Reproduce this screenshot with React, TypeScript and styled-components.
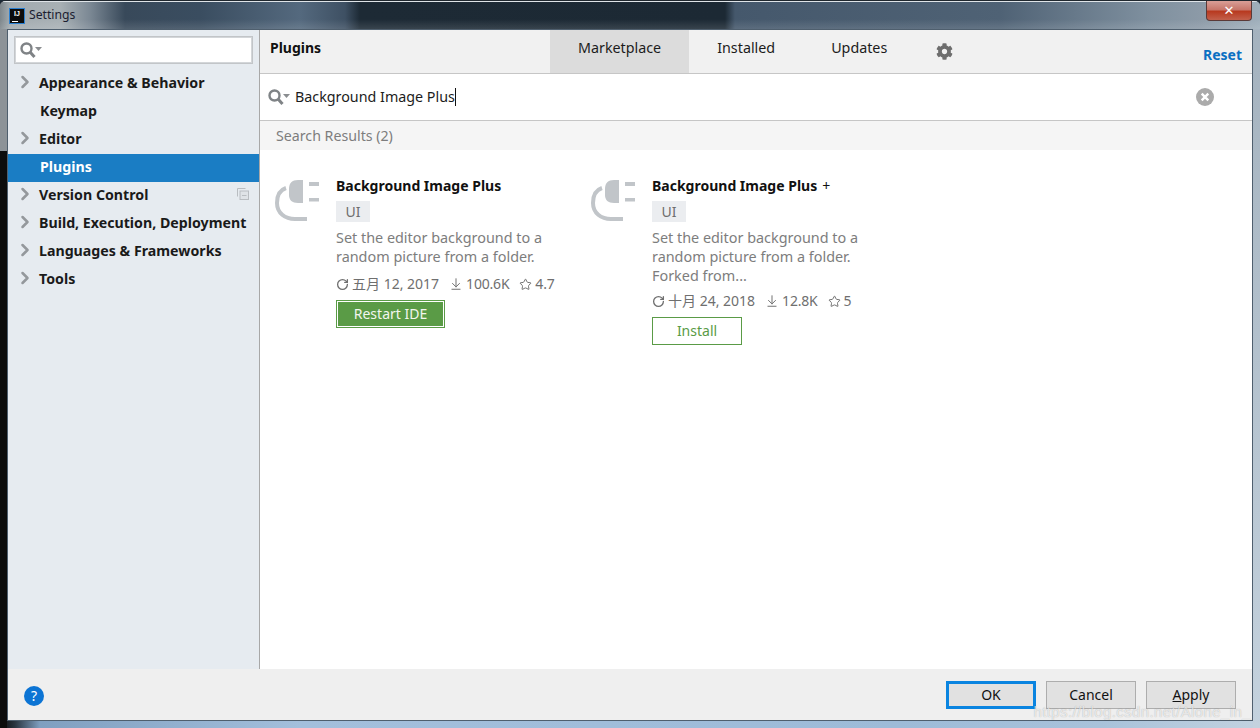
import React from "react";
import styled, { createGlobalStyle } from "styled-components";
import { ArrowDownToLine, ChevronRight, RotateCw, Star } from "lucide-react";
import { FaCog } from "react-icons/fa";

const fontStack = `"Noto Sans", "Noto Sans CJK SC", sans-serif`;

const GlobalStyle = createGlobalStyle`
  html, body {
    margin: 0;
    padding: 0;
    background: #1c2935;
  }
  * {
    box-sizing: border-box;
  }
`;

const treeItems = [
  { label: "Appearance & Behavior", arrow: true },
  { label: "Keymap" },
  { label: "Editor", arrow: true },
  { label: "Plugins", selected: true },
  { label: "Version Control", arrow: true, copy: true },
  { label: "Build, Execution, Deployment", arrow: true },
  { label: "Languages & Frameworks", arrow: true },
  { label: "Tools", arrow: true },
];

const tabs = ["Marketplace", "Installed", "Updates"];

const plugins = [
  {
    name: "Background Image Plus",
    description: ["Set the editor background to a", "random picture from a folder."],
    date: "五月 12, 2017",
    downloads: "100.6K",
    rating: "4.7",
    restart: true,
  },
  {
    name: "Background Image Plus",
    suffix: "+",
    description: [
      "Set the editor background to a",
      "random picture from a folder.",
      "Forked from...",
    ],
    date: "十月 24, 2018",
    downloads: "12.8K",
    rating: "5",
  },
];

const SearchIcon = () => (
  <svg width="23" height="16" viewBox="0 0 23 16">
    <circle cx="6.5" cy="6.5" r="5" fill="none" stroke="#7f8386" strokeWidth="2.4" />
    <path d="M10 10 L14.5 15" stroke="#7f8386" strokeWidth="3" />
    <path d="M15 5 H22 L18.5 9 Z" fill="#8a8d90" />
  </svg>
);

const PlugIcon = () => (
  <svg width="46" height="44" viewBox="0 0 46 44">
    <path d="M28 0 H23 C17 0 14 3 14 9 V15 C14 20 17 23 23 23 H28 Z" fill="#c1c5c9" />
    <rect x="34" y="2" width="10" height="4" fill="#c1c5c9" />
    <rect x="34" y="18" width="10" height="3.5" fill="#c1c5c9" />
    <path d="M11 8 C5 10 2 15 2 23 C2 33 10 39 20 39 H32" fill="none" stroke="#c1c5c9" strokeWidth="4" />
  </svg>
);

const CopyIcon = () => (
  <svg width="12" height="12" viewBox="0 0 12 12">
    <path d="M0.5 8.5 V0.5 H8.5" fill="none" stroke="#b9bdc1" />
    <rect x="3" y="3" width="8.5" height="8.5" fill="#dfe3e7" stroke="#b9bdc1" />
    <path d="M5 7.5 H9.5" stroke="#b9bdc1" />
  </svg>
);

const ClearIcon = () => (
  <svg width="18" height="18" viewBox="0 0 18 18">
    <circle cx="9" cy="9" r="9" fill="#ababab" />
    <path d="M5.7 5.7 L12.3 12.3 M12.3 5.7 L5.7 12.3" stroke="#fff" strokeWidth="2.4" />
  </svg>
);

const App = () => (
  <>
    <GlobalStyle />
    <Frame>
      <TitleBar>
        <AppLogo>
          <span>IJ</span>
          <i />
        </AppLogo>
        <TitleText>Settings</TitleText>
        <CloseButton>✕</CloseButton>
      </TitleBar>
      <Dialog>
        <Main>
          <Sidebar>
            <SidebarSearch>
              <SearchIcon />
            </SidebarSearch>
            <Tree>
              {treeItems.map((item) => (
                <TreeRow key={item.label} $selected={item.selected}>
                  <ArrowSlot>
                    {item.arrow && <ChevronRight size={20} strokeWidth={3} color="#94989c" />}
                  </ArrowSlot>
                  <TreeLabel $nudge={!item.arrow}>{item.label}</TreeLabel>
                  {item.copy && (
                    <CopySlot>
                      <CopyIcon />
                    </CopySlot>
                  )}
                </TreeRow>
              ))}
            </Tree>
          </Sidebar>
          <Content>
            <Header>
              <HeaderTitle>Plugins</HeaderTitle>
              <Tabs>
                {tabs.map((tab, i) => (
                  <Tab key={tab} $active={i === 0}>
                    {tab}
                  </Tab>
                ))}
              </Tabs>
              <GearSlot>
                <FaCog size={17} color="#6e6e6e" />
              </GearSlot>
              <ResetLink>Reset</ResetLink>
            </Header>
            <SearchBar>
              <SearchIcon />
              <SearchText>
                Background Image Plus
                <Caret />
              </SearchText>
              <ClearSlot>
                <ClearIcon />
              </ClearSlot>
            </SearchBar>
            <ResultsHeader>Search Results (2)</ResultsHeader>
            <Results>
              {plugins.map((plugin, i) => (
                <Card key={i}>
                  <PlugSlot>
                    <PlugIcon />
                  </PlugSlot>
                  <CardBody>
                    <CardName>
                      {plugin.name}
                      {plugin.suffix && <NameSuffix>{plugin.suffix}</NameSuffix>}
                    </CardName>
                    <Tag>UI</Tag>
                    <Description>
                      {plugin.description.map((line) => (
                        <div key={line}>{line}</div>
                      ))}
                    </Description>
                    <Meta>
                      <MetaItem>
                        <RotateCw size={13} strokeWidth={2.4} color="#6f6f6f" />
                        {plugin.date}
                      </MetaItem>
                      <MetaItem>
                        <ArrowDownToLine size={14} strokeWidth={1.7} color="#6f6f6f" />
                        <MetaNumber>{plugin.downloads}</MetaNumber>
                      </MetaItem>
                      <MetaItem>
                        <Star size={13} strokeWidth={1.8} color="#6f6f6f" />
                        <MetaNumber>{plugin.rating}</MetaNumber>
                      </MetaItem>
                    </Meta>
                    {plugin.restart ? (
                      <RestartButton>Restart IDE</RestartButton>
                    ) : (
                      <InstallButton>Install</InstallButton>
                    )}
                  </CardBody>
                </Card>
              ))}
            </Results>
          </Content>
        </Main>
        <Footer>
          <HelpButton>?</HelpButton>
          <FooterActions>
            <DialogButton $primary>OK</DialogButton>
            <DialogButton>Cancel</DialogButton>
            <DialogButton>
              <u>A</u>pply
            </DialogButton>
          </FooterActions>
        </Footer>
      </Dialog>
      <Watermark>https://blog.csdn.net/Alone_in_</Watermark>
    </Frame>
  </>
);

export default App;

const Frame = styled.div`
  position: relative;
  width: 1260px;
  height: 728px;
  overflow: hidden;
  display: flex;
  flex-direction: column;
  padding: 0 7px 7px 7px;
  font-family: ${fontStack};
  border-top: 1px solid #20282f;
  border-radius: 6px 6px 0 0;
  background:
    linear-gradient(180deg, #8d9398 0, #8d9398 150px, #0c0c0c 150px) left top / 7px 100% no-repeat,
    linear-gradient(180deg, #a3b1bd 0, #c4d2de 100%) right top / 7px 100% no-repeat,
    linear-gradient(90deg, #0a0a0a 0, #2a3540 15px, #7f9fc0 40px, #a3bfdc 300px, #9dbbd8 900px, #a8c2da 1100px, #c2d2e0 100%);
`;

const TitleBar = styled.div`
  height: 28px;
  margin: 0 -7px;
  padding: 0 8px 0 9px;
  display: flex;
  align-items: flex-start;
  box-shadow: inset 0 1px 0 #dfe4e8;
  background:
    linear-gradient(180deg, rgba(0, 0, 0, 0) 65%, rgba(255, 255, 255, 0.12) 100%),
    linear-gradient(
      90deg,
      #7d868b 0,
      #a2abb0 10px,
      #a8b0b4 60px,
      #7b8894 90px,
      #38495a 125px,
      #3a4d60 200px,
      #54697e 300px,
      #3e5063 345px,
      #1d2a35 360px,
      #1c2934 725px,
      #45586c 735px,
      #4f6275 1000px,
      #7f909f 1150px,
      #8c9aa7 1200px,
      #9fafbb 100%
    );
`;

const AppLogo = styled.div`
  width: 16px;
  height: 16px;
  margin-top: 7px;
  position: relative;
  background: #0c0c0c;
  border: 1px solid #2a7fd0;
  color: #fff;
  font: bold 7px "Liberation Sans", sans-serif;
  text-align: center;
  line-height: 9px;

  & > i {
    position: absolute;
    left: 2px;
    bottom: 1px;
    width: 6px;
    height: 1px;
    background: #fff;
  }
`;

const TitleText = styled.div`
  margin: 5px 0 0 4px;
  font-size: 12.2px;
  line-height: 18px;
  color: #1b2030;
`;

const CloseButton = styled.div`
  margin-left: auto;
  margin-top: 0;
  width: 46px;
  height: 20px;
  display: flex;
  align-items: center;
  justify-content: center;
  color: #fff;
  font: bold 13px "DejaVu Sans", sans-serif;
  border: 1px solid #5a3a38;
  border-top: 0;
  border-radius: 0 0 4px 4px;
  background: linear-gradient(180deg, #d99f97 0, #c7776b 45%, #b83a20 55%, #c2604c 100%);
`;

const Dialog = styled.div`
  flex: 1;
  display: flex;
  flex-direction: column;
  min-height: 0;
  border: 1px solid #4f5f6e;
  background: #f0f0f0;
`;

const Main = styled.div`
  flex: 1;
  display: flex;
  min-height: 0;
`;

const Sidebar = styled.div`
  width: 252px;
  background: #e6ebf0;
  border-right: 1px solid #a8a8a8;
  padding-top: 6px;
`;

const SidebarSearch = styled.div`
  width: 239px;
  height: 28px;
  margin-left: 6px;
  padding-left: 5px;
  display: flex;
  align-items: center;
  background: #fff;
  border: 1px solid #c2c5c8;
  outline: 1px solid #d3d6d9;
  outline-offset: -2px;
`;

const Tree = styled.div`
  margin-top: 6px;
`;

const TreeRow = styled.div<{ $selected?: boolean }>`
  height: 28px;
  padding: 0 0 4px 7px;
  display: flex;
  align-items: center;
  font-size: 14.2px;
  font-weight: 700;
  color: ${(props) => (props.$selected ? "#fff" : "#1a1a1a")};
  background: ${(props) => (props.$selected ? "#1a7dc4" : "transparent")};
`;

const ArrowSlot = styled.div`
  width: 24px;
  display: flex;
  align-items: center;
`;

const TreeLabel = styled.span<{ $nudge?: boolean }>`
  margin-left: ${(props) => (props.$nudge ? "1px" : "0")};
  white-space: nowrap;
`;

const CopySlot = styled.div`
  margin-left: auto;
  margin-right: 10px;
  display: flex;
`;

const Content = styled.div`
  flex: 1;
  display: flex;
  flex-direction: column;
  background: #fff;
`;

const Header = styled.div`
  height: 44px;
  display: flex;
  background: #f1f1f1;
  border-bottom: 1px solid #c6c6c6;
`;

const HeaderTitle = styled.div`
  width: 290px;
  padding: 7px 0 0 10px;
  font-size: 14px;
  line-height: 22px;
  font-weight: 700;
  color: #111;
`;

const Tabs = styled.div`
  display: flex;
`;

const Tab = styled.div<{ $active?: boolean }>`
  padding: 7px 28px 0;
  font-size: 14.3px;
  line-height: 22px;
  color: #1c1c1c;
  background: ${(props) => (props.$active ? "#dcdcdc" : "transparent")};
`;

const GearSlot = styled.div`
  margin: 13px 0 0 21px;
`;

const ResetLink = styled.div`
  margin-left: auto;
  padding: 15px 10px 0 0;
  font-size: 14px;
  line-height: 20px;
  font-weight: 700;
  color: #0a6fc2;
`;

const SearchBar = styled.div`
  height: 47px;
  padding: 0 38px 0 8px;
  display: flex;
  align-items: center;
  border-bottom: 1px solid #c6c6c6;
  background: #fff;
`;

const SearchText = styled.div`
  margin-left: 4px;
  font-size: 14.3px;
  line-height: 20px;
  color: #1c1c1c;
  display: flex;
  align-items: center;
`;

const Caret = styled.span`
  display: inline-block;
  width: 1px;
  height: 18px;
  background: #111;
`;

const ClearSlot = styled.div`
  margin-left: auto;
  display: flex;
`;

const ResultsHeader = styled.div`
  height: 29px;
  padding-left: 16px;
  font-size: 14.2px;
  line-height: 29px;
  color: #7d7d7d;
  background: #f5f5f5;
`;

const Results = styled.div`
  flex: 1;
  display: flex;
  padding: 26px 0 0 15px;
  background: #fff;
`;

const Card = styled.div`
  width: 316px;
  display: flex;
`;

const PlugSlot = styled.div`
  width: 61px;
  padding-top: 4px;
`;

const CardBody = styled.div`
  display: flex;
  flex-direction: column;
  align-items: flex-start;
`;

const CardName = styled.div`
  font-size: 14px;
  line-height: 20px;
  font-weight: 700;
  color: #111;
`;

const NameSuffix = styled.span`
  margin-left: 5px;
  font-weight: 400;
`;

const Tag = styled.div`
  width: 34px;
  height: 21px;
  margin-top: 5px;
  font-size: 14px;
  line-height: 21px;
  text-align: center;
  color: #6e6e6e;
  background: #ebedf0;
`;

const Description = styled.div`
  min-height: 40px;
  margin-top: 6px;
  font-size: 14.4px;
  line-height: 19px;
  color: #7d7d7d;
`;

const Meta = styled.div`
  display: flex;
  gap: 10px;
  margin-top: 6px;
  font-size: 14px;
  line-height: 20px;
  color: #6f6f6f;
`;

const MetaItem = styled.div`
  display: flex;
  align-items: center;
  gap: 3px;
`;

const MetaNumber = styled.span`
  letter-spacing: -0.2px;
`;

const RestartButton = styled.div`
  width: 109px;
  height: 28px;
  margin-top: 6px;
  font-size: 14px;
  line-height: 25px;
  text-align: center;
  color: #f2f6ee;
  background: #5a9b46;
  border: 1px solid #5a9b46;
  box-shadow: inset 0 0 0 1px #fff;
`;

const InstallButton = styled.div`
  width: 90px;
  height: 28px;
  margin-top: 6px;
  font-size: 14px;
  line-height: 26px;
  text-align: center;
  color: #5a9b46;
  background: #fff;
  border: 1px solid #5a9b46;
`;

const Footer = styled.div`
  height: 51px;
  display: flex;
  align-items: center;
  justify-content: space-between;
  padding: 0 16px 0 16px;
  background: #efefef;
`;

const HelpButton = styled.div`
  width: 20px;
  height: 20px;
  margin-top: 2px;
  border-radius: 50%;
  background: #0c74d4;
  color: #fff;
  font-size: 14px;
  line-height: 20px;
  text-align: center;
`;

const FooterActions = styled.div`
  display: flex;
  gap: 10px;
`;

const DialogButton = styled.div<{ $primary?: boolean }>`
  width: 90px;
  height: 28px;
  font-size: 14px;
  line-height: ${(props) => (props.$primary ? "22px" : "26px")};
  text-align: center;
  color: #111;
  background: #e1e1e1;
  border: ${(props) => (props.$primary ? "3px solid #0a84e0" : "1px solid #adadad")};
`;

const Watermark = styled.div`
  position: absolute;
  right: 9px;
  bottom: 8px;
  font: 15px "Liberation Sans", sans-serif;
  letter-spacing: 0.4px;
  color: rgba(255, 255, 255, 0.7);
  text-shadow: 0 0 1px rgba(0, 0, 0, 0.3);
`;
